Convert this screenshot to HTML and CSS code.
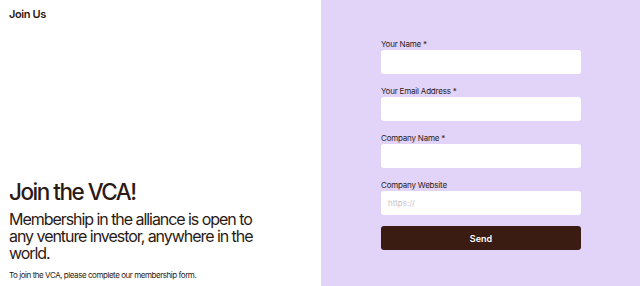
FILE: index.html
```html
<!DOCTYPE html>
<html>
<head>
<meta charset="utf-8">
<link rel="stylesheet" href="styles.css">
</head>
<body>
<div class="page">
  <section class="intro">
    <div class="brand">Join Us</div>
    <div class="intro-body">
      <h1 class="title">Join the VCA!</h1>
      <p class="lead">Membership in the alliance is open to any venture investor, anywhere in the world.</p>
      <p class="note">To join the VCA, please complete our membership form.</p>
    </div>
  </section>
  <section class="panel">
    <form class="form">
      <label class="field">
        <span class="label">Your Name *</span>
        <input class="input" type="text">
      </label>
      <label class="field">
        <span class="label">Your Email Address *</span>
        <input class="input" type="email">
      </label>
      <label class="field">
        <span class="label">Company Name *</span>
        <input class="input" type="text">
      </label>
      <label class="field">
        <span class="label">Company Website</span>
        <input class="input" type="text" placeholder="https://">
      </label>
      <button class="send" type="button">Send</button>
    </form>
  </section>
</div>
</body>
</html>
```

FILE: styles.css
```css
* { box-sizing: border-box; }
html, body { margin: 0; padding: 0; }
body {
  font-family: Inter, "Noto Sans", sans-serif;
  color: #2b1a14;
  background: #fff;
}
.page {
  display: flex;
  width: 640px;
  height: 286px;
}
.intro {
  width: 321px;
  flex: none;
  display: flex;
  flex-direction: column;
  justify-content: space-between;
  padding: 7px 9px 6px 9px;
}
.brand {
  font-size: 11px;
  font-weight: 600;
  letter-spacing: -0.4px;
}
.title {
  margin: 0 0 6px;
  font-size: 22.5px;
  font-weight: 500;
  letter-spacing: -1.5px;
  line-height: 26px;
}
.lead {
  margin: 0 0 8px;
  font-size: 16px;
  line-height: 17px;
  letter-spacing: -1.05px;
  width: 256px;
}
.note {
  margin: 0;
  font-size: 8px;
  line-height: 10px;
  letter-spacing: -0.45px;
}
.panel {
  flex: 1;
  background: #e2d3f9;
  padding: 38px 0 0 60px;
}
.form {
  width: 200px;
  display: flex;
  flex-direction: column;
}
.field {
  display: flex;
  flex-direction: column;
  margin-bottom: 11px;
}
.label {
  font-size: 8px;
  line-height: 12px;
  letter-spacing: -0.2px;
  color: #2b1a14;
}
.input {
  height: 24px;
  border: none;
  border-radius: 3px;
  background: #fff;
  padding: 0 7px;
  font-family: inherit;
  font-size: 8px;
  outline: none;
}
.input::placeholder { color: #c9c3c3; }
.send {
  height: 24px;
  border: none;
  border-radius: 3px;
  background: #3a1c13;
  color: #fff;
  font-family: inherit;
  font-size: 9px;
  font-weight: 600;
}
```
